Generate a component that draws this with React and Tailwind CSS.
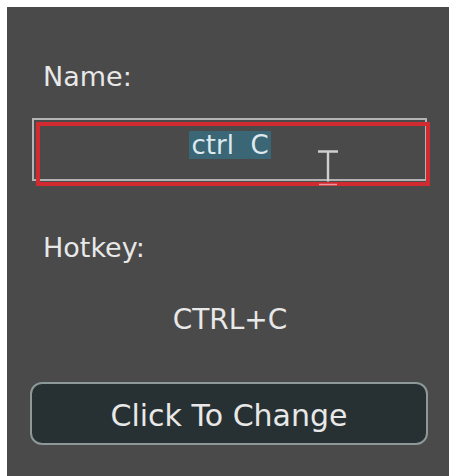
export default function App() {
  return (
    <div className="h-[476px] w-[451px] overflow-hidden bg-white font-['DejaVu_Sans',sans-serif] text-[#e8e8e8]">
      <div className="ml-[7px] mr-[2px] mt-[7px] flex h-[469px] flex-col bg-[#4a4a4a]">
        <div className="ml-[36px] mt-[54px] text-[27px] leading-[32px]">Name:</div>

        <div className="relative ml-[25px] mt-[25px] flex h-[63px] w-[395px] items-center justify-center border-2 border-[#b3b3b3] pb-[10px] pl-[1px]">
          <div
            aria-hidden="true"
            className="pointer-events-none absolute left-[2px] top-[2px] h-[64px] w-[394px] border-[4px] border-[#d12a30]"
          />
          <span className="relative whitespace-pre bg-[#3b6675] px-[2px] text-[26px] leading-[28px] text-[#dceaf0]">
            ctrl  C
          </span>
          <svg
            className="absolute left-[283px] top-[30px]"
            width="22"
            height="36"
            viewBox="0 0 22 36"
            fill="none"
          >
            <path d="M1 1.5h20M11 1.5v30" stroke="#cfcfcf" strokeWidth="2.4" />
            <path d="M2 34.5h18" stroke="#e79a9e" strokeWidth="1.5" />
          </svg>
        </div>

        <div className="ml-[36px] mt-[51px] text-[27px] leading-[32px]">Hotkey:</div>

        <div className="mt-[40px] pl-[4px] text-center text-[28px] leading-[32px]">CTRL+C</div>

        <button
          type="button"
          className="ml-[23px] mt-[46px] flex h-[63px] w-[398px] items-center justify-center rounded-[12px] border-2 border-[#8d9898] bg-[#273133] pt-[4px] text-[30px] text-[#e8e8e8]"
        >
          Click To Change
        </button>
      </div>
    </div>
  );
}
